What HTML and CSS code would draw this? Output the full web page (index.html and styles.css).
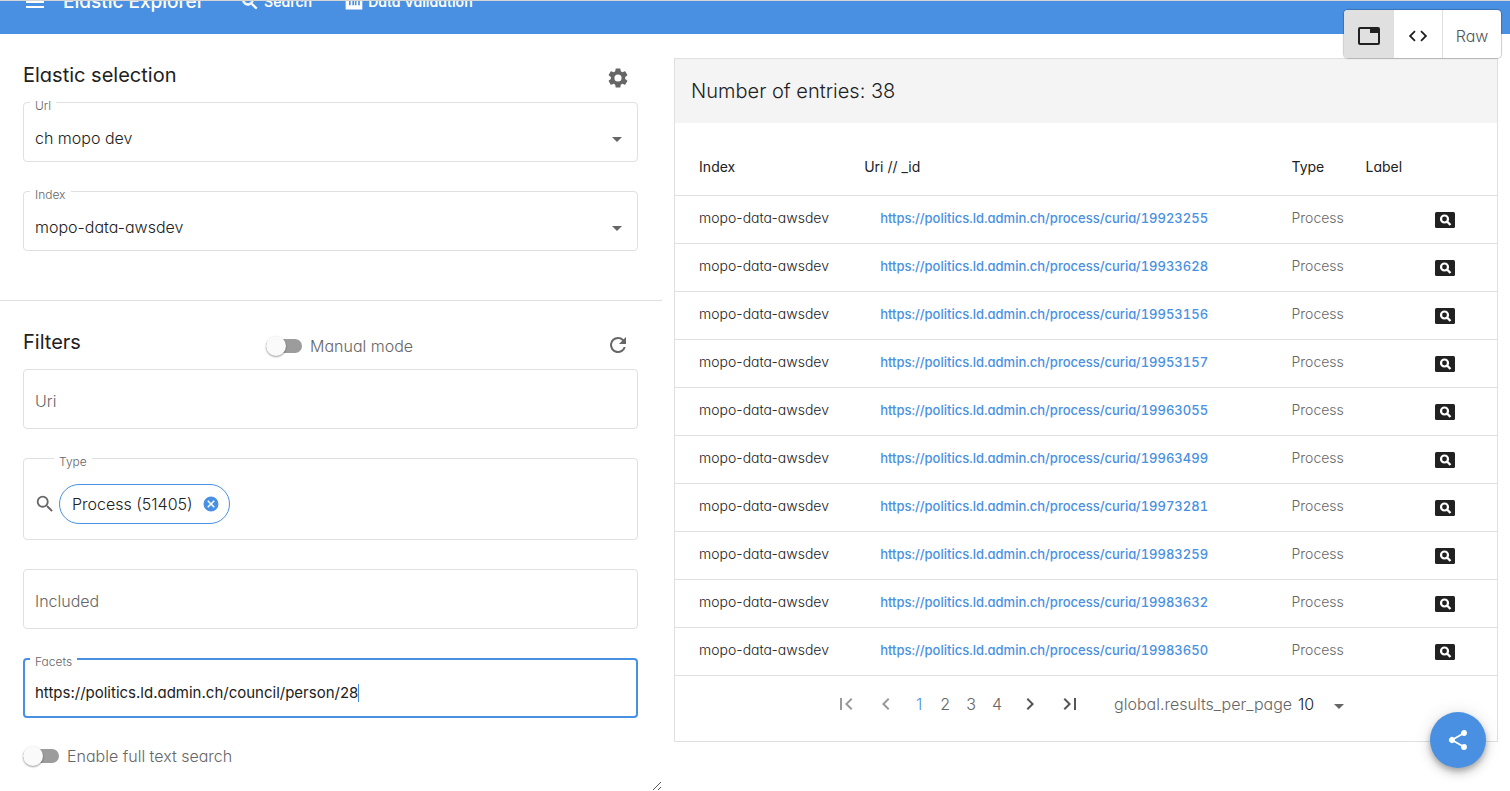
FILE: index.html
```
<!DOCTYPE html>
<html lang="en">
<head>
<meta charset="utf-8">
<title>Elastic Explorer</title>
<meta name="viewport" content="width=device-width, initial-scale=1">
<link rel="stylesheet" href="styles.css">
</head>
<body>
<header class="topbar">
  <nav class="toolbar" aria-label="Main">
    <button class="icon-btn menu-btn" type="button" aria-label="Menu"><svg viewBox="0 0 24 24"><path d="M3 18h18v-2H3v2zm0-5h18v-2H3v2zm0-7v2h18V6H3z"/></svg></button>
    <span class="brand">Elastic Explorer</span>
    <a class="nav-link nav-search" href="#search"><svg viewBox="0 0 24 24"><path d="M15.5 14h-.8l-.3-.3A6.5 6.5 0 1 0 13.700 14.400l.3.3v.8l5 5 1.500-1.500zm-6 0a4.500 4.500 0 1 1 0-9 4.500 4.500 0 0 1 0 9z" stroke="currentColor"/></svg>Search</a>
    <a class="nav-link nav-data" href="#validation"><svg viewBox="0 0 24 24"><path d="M20 5H4a2 2 0 0 0-2 2v14h20V7a2 2 0 0 0-2-2zM8 16H6V9h2zm4 0h-2V9h2zm3 0h-2V9h2zm4 0h-2V9h2z"/></svg>Data Validation</a>
  </nav>
</header>

<main class="workspace">
  <form class="pane">
    <section class="group selection">
      <div class="group-head">
        <h2>Elastic selection</h2>
        <button class="icon-btn" type="button" aria-label="Settings"><svg viewBox="0 0 24 24"><path d="M19.14 12.94c.04-.3.06-.61.06-.94 0-.32-.02-.64-.07-.94l2.03-1.580a.49.49 0 0 0 .12-.61l-1.920-3.320a.49.49 0 0 0-.59-.22l-2.390.96a7 7 0 0 0-1.620-.94l-.36-2.540a.48.48 0 0 0-.48-.41h-3.840a.47.47 0 0 0-.47.41l-.36 2.540c-.59.24-1.130.57-1.620.94l-2.390-.96a.47.47 0 0 0-.59.22L2.740 8.870a.47.47 0 0 0 .12.61l2.030 1.580c-.05.3-.09.63-.09.94s.02.64.07.94l-2.030 1.580a.49.49 0 0 0-.12.61l1.920 3.320c.12.22.37.29.59.22l2.390-.96c.5.38 1.030.7 1.620.94l.36 2.540c.05.24.24.41.48.41h3.840c.24 0 .44-.17.47-.41l.36-2.540a7 7 0 0 0 1.620-.94l2.390.96c.22.08.47 0 .59-.22l1.920-3.320a.47.47 0 0 0-.12-.61zM12 15.600a3.600 3.600 0 1 1 0-7.200 3.600 3.600 0 0 1 0 7.200z"/></svg></button>
      </div>
      <div class="fields">
        <div class="field has-arrow">
          <label for="url">Url</label>
          <select id="url"><option>ch mopo dev</option></select>
        </div>
        <div class="field has-arrow">
          <label for="index">Index</label>
          <select id="index"><option>mopo-data-awsdev</option></select>
        </div>
      </div>
    </section>

    <section class="group filters">
      <div class="group-head">
        <h2>Filters</h2>
        <label class="switch"><input type="checkbox" role="switch">Manual mode</label>
        <button class="icon-btn" type="button" aria-label="Refresh"><svg viewBox="0 0 24 24"><path d="M17.650 6.350A7.960 7.960 0 0 0 12 4a8 8 0 1 0 7.730 10h-2.080A6 6 0 1 1 12 6c1.660 0 3.140.69 4.220 1.780L13 11h7V4z"/></svg></button>
      </div>
      <div class="fields">
        <div class="field plain"><input type="text" aria-label="Uri" placeholder="Uri"></div>
        <div class="field chips">
          <label for="type">Type</label>
          <svg class="lens" viewBox="0 0 24 24"><path d="M15.500 14h-.79l-.28-.27A6.470 6.470 0 0 0 16 9.500 6.500 6.500 0 1 0 9.500 16c1.610 0 3.090-.59 4.230-1.570l.27.28v.79l5 4.990L20.490 19zm-6 0a4.500 4.500 0 1 1 0-9 4.500 4.500 0 0 1 0 9z"/></svg>
          <span class="chip">Process (51405)<button type="button" aria-label="Remove Process"><svg viewBox="0 0 24 24"><path d="M12 2a10 10 0 1 0 0 20 10 10 0 0 0 0-20zm5 13.590L15.590 17 12 13.410 8.410 17 7 15.590 10.590 12 7 8.410 8.410 7 12 10.590 15.590 7 17 8.410 13.410 12z"/></svg></button></span>
          <input id="type" type="text">
        </div>
        <div class="field plain"><input type="text" aria-label="Included" placeholder="Included"></div>
        <div class="field active">
          <label for="facets">Facets</label>
          <input id="facets" type="text" value="https://politics.ld.admin.ch/council/person/28">
        </div>
      </div>
      <label class="switch fulltext"><input type="checkbox" role="switch">Enable full text search</label>
    </section>
    <svg class="grip" viewBox="0 0 10 10" aria-hidden="true"><path d="M1 9 9 1M6 9l3-3"/></svg>
  </form>

  <section class="results">
    <h2 class="results-head">Number of entries: 38</h2>
    <table>
      <colgroup><col class="c-index"><col class="c-uri"><col class="c-type"><col class="c-label"><col></colgroup>
      <thead><tr><th>Index</th><th>Uri // _id</th><th>Type</th><th>Label</th><th></th></tr></thead>
      <tbody id="rows"></tbody>
    </table>
    <nav class="pager" aria-label="Pages">
      <button type="button" aria-label="First page" disabled><svg viewBox="0 0 24 24"><path d="M18.410 16.590 13.820 12l4.590-4.590L17 6l-6 6 6 6zM6 6h2v12H6z"/></svg></button>
      <button type="button" aria-label="Previous page" disabled><svg viewBox="0 0 24 24"><path d="M15.410 7.410 14 6l-6 6 6 6 1.410-1.410L10.830 12z"/></svg></button>
      <div class="pages"><a class="current" href="#1">1</a><a href="#2">2</a><a href="#3">3</a><a href="#4">4</a></div>
      <button type="button" aria-label="Next page"><svg viewBox="0 0 24 24"><path d="M10 6 8.590 7.410 13.170 12l-4.580 4.590L10 18l6-6z"/></svg></button>
      <button type="button" aria-label="Last page"><svg viewBox="0 0 24 24"><path d="M5.590 7.410 10.180 12l-4.590 4.590L7 18l6-6-6-6zM16 6h2v12h-2z"/></svg></button>
      <div class="page-size has-arrow">
        <label for="size">global.results_per_page</label>
        <select id="size"><option>10</option></select>
      </div>
    </nav>
  </section>
</main>

<div class="view-toggle" role="group" aria-label="View">
  <button class="on" type="button" aria-label="Table view"><svg viewBox="0 0 24 24"><path d="M21 3H3a2 2 0 0 0-2 2v14c0 1.100.9 2 2 2h18a2 2 0 0 0 2-2V5a2 2 0 0 0-2-2zm0 16H3V5h10v4h8z"/></svg></button>
  <button type="button" aria-label="Code view"><svg viewBox="0 0 24 24"><path d="M9.400 16.600 4.800 12l4.600-4.600L8 6l-6 6 6 6zm5.200 0 4.600-4.600-4.600-4.600L16 6l6 6-6 6z"/></svg></button>
  <button type="button">Raw</button>
</div>
<button class="share" type="button" aria-label="Share"><svg viewBox="0 0 24 24"><path d="M18 16.080c-.76 0-1.440.3-1.960.77L8.910 12.700c.05-.23.09-.46.09-.7s-.04-.47-.09-.7l7.050-4.110A3 3 0 1 0 15 5c0 .24.04.47.09.7L8.040 9.810a3 3 0 1 0 0 4.380l7.120 4.160c-.05.21-.08.43-.08.65a2.920 2.920 0 1 0 2.920-2.920z"/></svg></button>
<script src="app.js"></script>
</body>
</html>
```
FILE: styles.css
```
* { box-sizing: border-box; }

body {
  margin: 0;
  min-height: 100vh;
  background: #fff;
  color: #212121;
  font: 300 16px/24px Inter, "Open Sans", sans-serif;
  font-feature-settings: "cv11";
}

button, input, select { font: inherit; font-feature-settings: inherit; color: inherit; }
button { border: 0; padding: 0; background: none; cursor: pointer; }
svg { width: 24px; height: 24px; fill: currentColor; display: block; }
h2 { margin: 0; font-size: 20px; font-weight: 400; line-height: 34px; }

.topbar { height: 34px; overflow: hidden; background: #4990e2; border-top: 1px solid #d5d5d5; color: #fff; }
.toolbar { display: flex; align-items: center; height: 64px; margin-top: -31px; padding-left: 23px; font-weight: 600; }
.brand { margin-left: 16px; font-size: 19px; font-weight: 500; }
.nav-link { display: flex; align-items: center; gap: 4px; color: inherit; font-size: 14px; text-decoration: none; }
.nav-link svg { width: 20px; height: 20px; }
.nav-search { margin-left: 36px; }
.nav-data { margin-left: 32px; }

.workspace { display: flex; align-items: flex-start; padding-right: 12px; }
.pane { position: relative; flex: none; width: 44.2%; min-height: calc(100vh - 34px); }
.grip { position: absolute; right: 0; bottom: 0; width: 10px; height: 10px; fill: none; stroke: #555; }
.group { padding: 24px 24px 0 23px; }
.selection { padding-bottom: 49px; border-bottom: 1px solid #e0e0e0; }
.group-head { display: grid; grid-template-columns: 243px 1fr 40px; align-items: start; height: 44px; }
.icon-btn { display: grid; place-items: center; width: 40px; height: 40px; color: #666; }
.menu-btn { width: 24px; color: inherit; }
.group-head .icon-btn { grid-column: 3; }

.fields { display: grid; gap: 29px; }
.field { position: relative; display: flex; align-items: center; height: 60px; padding: 12px 11px 0; border: 1px solid #e0e0e0; border-radius: 4px; }
.field.plain { padding-top: 4px; }
.field label { position: absolute; top: -9px; left: 6px; padding: 0 5px; background: #fff; color: #666; font-size: 12px; line-height: 24px; height: 22px; }
.field input, .field select { flex: 1; min-width: 0; height: 32px; padding: 0; border: 0; outline: 0; background: none; appearance: none; }
.field input::placeholder { color: #666; opacity: 1; }
.has-arrow::after { content: ""; border: 5px solid transparent; border-top-color: #666; border-bottom: 0; pointer-events: none; }
.field.has-arrow::after { margin: 2px 4px 0 0; }
.field.active { border: 2px solid #4990e2; padding: 10px 10px 0; }
.field.active label { top: -10px; left: 5px; }
.field.active input { flex: none; field-sizing: content; max-width: 100%; height: 18px; border-right: 1px solid #4990e2; font-size: 15px; font-weight: 400; caret-color: transparent; }
.field.chips { height: 82px; gap: 3px; padding-top: 10px; padding-left: 10px; }
.field.chips label { left: 30px; }
.field .lens { flex: none; width: 22px; color: #666; }
.chip { display: flex; align-items: center; gap: 9px; height: 40px; padding: 0 9px 0 12px; border: 1px solid #4990e2; border-radius: 20px; }
.chip button { color: #4990e2; }
.chip svg { width: 18px; height: 18px; }

.switch { display: flex; align-items: center; gap: 8px; height: 41px; color: #666; }
.switch input { position: relative; width: 36px; height: 14px; margin: 0; border-radius: 7px; background: #9c9c9c; appearance: none; }
.switch input::before { content: ""; position: absolute; top: -3px; left: 0; width: 20px; height: 20px; border-radius: 50%; background: #fafafa; box-shadow: 0 1px 2px #0006; }
.fulltext { margin-top: 17px; }

.results { flex: 1; margin: 24px 0 0 12px; border: 1px solid #e0e0e0; }
.results-head { padding: 15px 16px; background: #f4f4f4; font-weight: 300; }
table { width: 100%; border-collapse: collapse; table-layout: fixed; font-size: 14px; }
.c-index { width: 23%; }
.c-uri { width: 52%; }
.c-type { width: 9%; }
.c-label { width: 8%; }
th { height: 73px; padding: 16px 0 0; border-bottom: 1px solid #e0e0e0; font-weight: 400; text-align: left; }
td { height: 48px; padding: 0 0 2px; border-bottom: 1px solid #e0e0e0; }
thead th { height: 72px; }
th:first-child, td:first-child { padding-left: 24px; }
td:nth-child(2) { padding-left: 16px; }
td:nth-child(3) { color: #666; }
td:last-child { padding: 2px 0 0 4px; }
td a { color: #4990e2; font-size: 13px; font-weight: 500; font-variant-numeric: tabular-nums; text-decoration: none; }
td button { display: block; }
td svg { width: 20px; height: 16px; }

.pager { display: flex; align-items: center; height: 65px; padding-left: 151px; padding-bottom: 8px; color: #666; }
.pager button { display: grid; place-items: center; width: 40px; height: 40px; color: #555; }
.pager button:disabled { color: #999; }
.pages { display: flex; }
.pages a { width: 26px; color: inherit; text-align: center; text-decoration: none; }
.pages .current { color: #4990e2; }
.page-size { display: flex; align-items: center; gap: 6px; margin-left: 24px; }
.page-size select { width: 30px; padding: 0; border: 0; background: none; color: #212121; appearance: none; }
.page-size::after { margin-top: 4px; }

.view-toggle { position: absolute; top: 10px; right: 9px; display: flex; height: 48px; border-radius: 4px; background: #fff; box-shadow: 0 0 1px 1px #0003; overflow: hidden; }
.view-toggle button { display: grid; place-items: center; width: 49px; padding-top: 3px; }
.view-toggle button + button { border-left: 1px solid #e0e0e0; }
.view-toggle button:last-child { width: 59px; color: #555; }
.view-toggle .on { background: #e0e0e0; }
.view-toggle button:nth-child(2) svg { width: 22px; }

.share { position: absolute; right: 24px; bottom: 23px; display: grid; place-items: center; width: 56px; height: 56px; border-radius: 50%; background: #4990e2; color: #fff; box-shadow: 0 3px 5px #0003, 0 6px 10px #00000024, 0 1px 18px #0000001f; }
```
FILE: app.js
```
const ids = [19923255, 19933628, 19953156, 19953157, 19963055, 19963499, 19973281, 19983259, 19983632, 19983650];
const lens = '<svg viewBox="0 0 20 16"><rect width="20" height="16" rx="1.500"/><circle cx="9.500" cy="7" r="3.500" fill="none" stroke="#fff" stroke-width="2.200"/><path d="m12 9.500 3.500 3.500" stroke="#fff" stroke-width="2.400"/></svg>';

document.getElementById("rows").innerHTML = ids.map((id) => {
  const uri = `https://politics.ld.admin.ch/process/curia/${id}`;
  return `<tr><td>mopo-data-awsdev</td><td><a href="${uri}">${uri}</a></td><td>Process</td><td></td>
    <td><button type="button" aria-label="Inspect ${id}">${lens}</button></td></tr>`;
}).join("");

const facets = document.getElementById("facets");
facets.focus();
facets.setSelectionRange(facets.value.length, facets.value.length);
```
